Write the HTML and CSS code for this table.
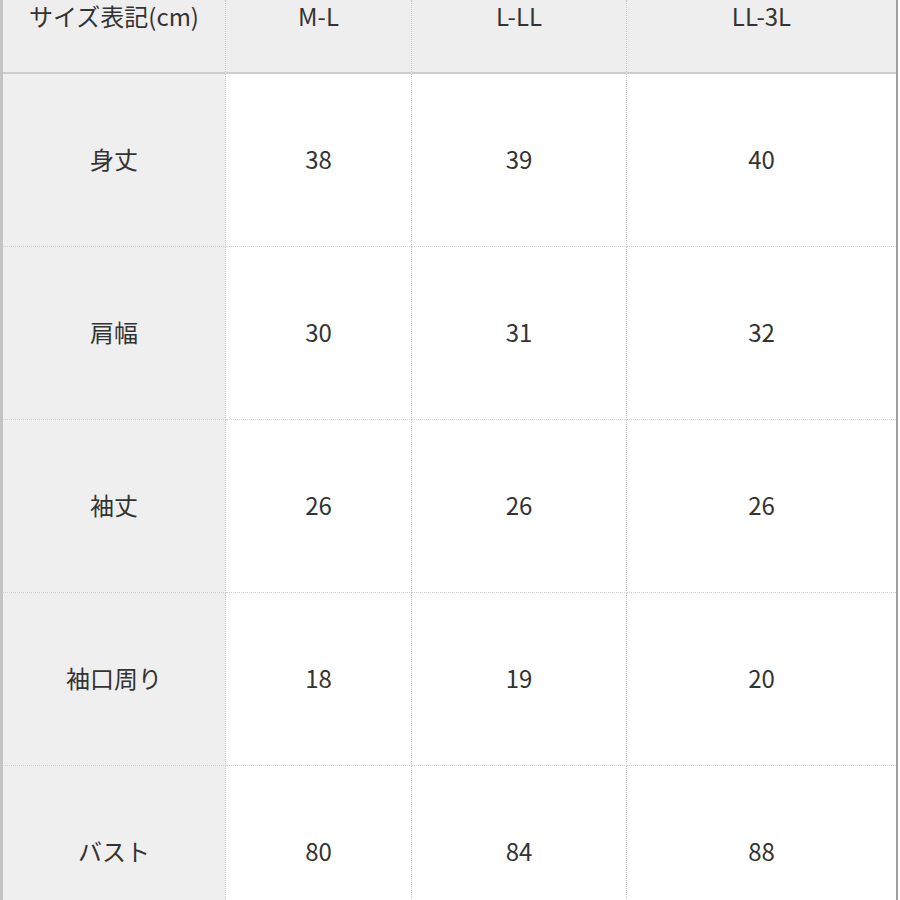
FILE: index.html
```html
<!DOCTYPE html>
<html lang="ja">
<head>
<meta charset="utf-8">
<title>サイズ表</title>
<link rel="stylesheet" href="styles.css">
</head>
<body>
<div class="size-table">
  <div class="cell head label">サイズ表記(cm)</div>
  <div class="cell head">M-L</div>
  <div class="cell head">L-LL</div>
  <div class="cell head last">LL-3L</div>

  <div class="cell label">身丈</div>
  <div class="cell">38</div>
  <div class="cell">39</div>
  <div class="cell last">40</div>

  <div class="cell label">肩幅</div>
  <div class="cell">30</div>
  <div class="cell">31</div>
  <div class="cell last">32</div>

  <div class="cell label">袖丈</div>
  <div class="cell">26</div>
  <div class="cell">26</div>
  <div class="cell last">26</div>

  <div class="cell label">袖口周り</div>
  <div class="cell">18</div>
  <div class="cell">19</div>
  <div class="cell last">20</div>

  <div class="cell label">バスト</div>
  <div class="cell">80</div>
  <div class="cell">84</div>
  <div class="cell last">88</div>
</div>
</body>
</html>
```

FILE: styles.css
```css
html, body {
  margin: 0;
  padding: 0;
  background: #ffffff;
}

body {
  font-family: "Noto Sans CJK JP", "Noto Sans", sans-serif;
  color: #333333;
  overflow: hidden;
}

.size-table {
  width: 898px;
  box-sizing: border-box;
  border-left: 3px solid #c4c4c4;
  border-right: 2px solid #a0a0a0;
  display: grid;
  grid-template-columns: 223px 186px 215px 269px;
  grid-template-rows: 74px;
  grid-auto-rows: 173px;
}

.cell {
  box-sizing: border-box;
  border-right: 1px dotted #c8c8c8;
  border-bottom: 1px dotted #cfcfcf;
  display: flex;
  align-items: center;
  justify-content: center;
  padding-bottom: 3px;
  font-size: 24px;
  line-height: 30px;
  background: #ffffff;
}

.cell.last {
  border-right: none;
}

.cell.label {
  background: #efefef;
}

.cell.head {
  align-items: flex-start;
  padding-top: 1px;
  padding-bottom: 0;
  background: #eeeeee;
  border-bottom: 2px solid #cdcdcd;
}
```
